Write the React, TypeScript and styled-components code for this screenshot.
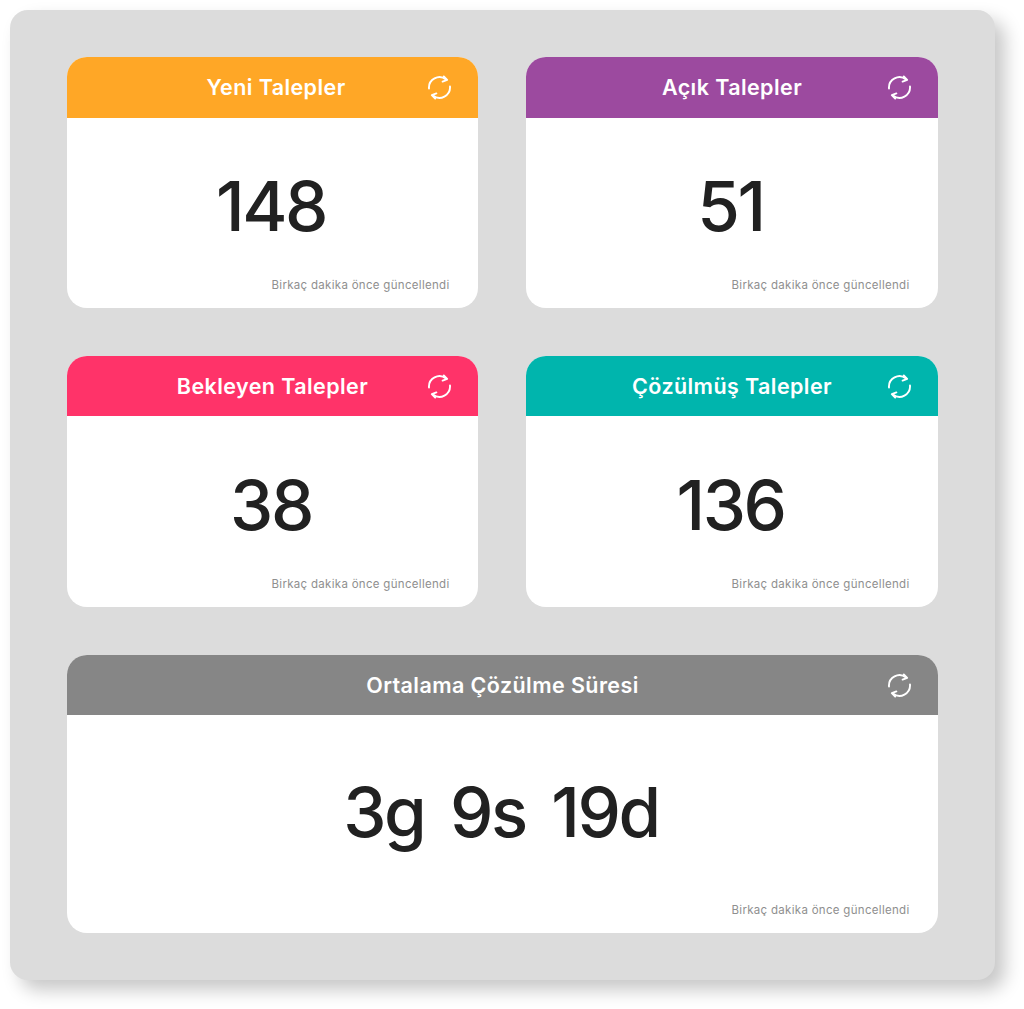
import React from 'react';
import styled, { createGlobalStyle } from 'styled-components';

const GlobalStyle = createGlobalStyle`
  html, body {
    margin: 0;
    background: #ffffff;
  }
`;

const Page = styled.div`
  box-sizing: border-box;
  width: 1024px;
  height: 1009px;
  padding: 10px 29px 29px 10px;
  overflow: hidden;
  font-family: 'Inter', 'Liberation Sans', sans-serif;
`;

const Panel = styled.main`
  box-sizing: border-box;
  width: 985px;
  height: 970px;
  padding: 47px 57px;
  display: grid;
  grid-template-columns: 411px 412px;
  grid-template-rows: 250.75px 250.75px 278.5px;
  gap: 48px;
  background: #dcdcdc;
  border-radius: 18px;
  box-shadow: 10px 10px 18px rgba(0, 0, 0, 0.22);
`;

const Card = styled.section<{ $wide?: boolean }>`
  display: flex;
  flex-direction: column;
  background: #ffffff;
  border-radius: 20px;
  overflow: hidden;
  ${props => props.$wide && 'grid-column: 1 / span 2;'}
`;

const CardHeader = styled.header<{ $color: string }>`
  position: relative;
  flex: 0 0 60.5px;
  display: flex;
  align-items: center;
  justify-content: center;
  background: ${props => props.$color};
`;

const Title = styled.h2<{ $shift?: number }>`
  margin: 0;
  padding-left: ${props => props.$shift ?? 0}px;
  color: #ffffff;
  font-size: 21.5px;
  font-weight: 600;
  letter-spacing: 0.42px;
`;

const RefreshButton = styled.svg`
  position: absolute;
  top: 18px;
  right: 26px;
  width: 25px;
  height: 25px;
  fill: none;
  stroke: #ffffff;
  stroke-width: 1.9;
  stroke-linecap: round;
  stroke-linejoin: round;
`;

const CardBody = styled.div<{ $wide?: boolean }>`
  flex: 1;
  display: flex;
  flex-direction: column;
  align-items: center;
  justify-content: center;
  position: relative;
  padding-right: 3px;
  padding-bottom: ${props => (props.$wide ? 24 : 12)}px;
`;

const Value = styled.div`
  color: #212121;
  font-size: 69px;
  font-weight: 500;
  line-height: 1;
  letter-spacing: -2.4px;
  word-spacing: 9.5px;
`;

const Updated = styled.small`
  position: absolute;
  right: 28.5px;
  bottom: 15px;
  color: #8f8f8f;
  font-size: 11.5px;
  line-height: 16px;
  letter-spacing: 0.3px;
`;

const RefreshIcon: React.FC = () => (
  <RefreshButton viewBox="0 0 25 25">
    <path d="M2 13.5A10.5 10.5 0 0 1 19 4.5" />
    <path d="M16.8 1.4L20.2 4.8L15.6 6.6" />
    <path d="M23 11.5A10.5 10.5 0 0 1 6 20.5" />
    <path d="M8.2 23.6L4.8 20.2L9.4 18.4" />
  </RefreshButton>
);

const stats = [
  { title: 'Yeni Talepler', value: '148', color: '#ffa726', shift: 7 },
  { title: 'Açık Talepler', value: '51', color: '#9c4a9f' },
  { title: 'Bekleyen Talepler', value: '38', color: '#ff3369' },
  { title: 'Çözülmüş Talepler', value: '136', color: '#00b5ad' },
  { title: 'Ortalama Çözülme Süresi', value: '3g 9s 19d', color: '#868686', wide: true },
];

const App: React.FC = () => {
  return (
    <Page>
      <GlobalStyle />
      <Panel>
        {stats.map(stat => (
          <Card key={stat.title} $wide={stat.wide}>
            <CardHeader $color={stat.color}>
              <Title $shift={stat.shift}>{stat.title}</Title>
              <RefreshIcon />
            </CardHeader>
            <CardBody $wide={stat.wide}>
              <Value>{stat.value}</Value>
              <Updated>Birkaç dakika önce güncellendi</Updated>
            </CardBody>
          </Card>
        ))}
      </Panel>
    </Page>
  );
};

export default App;
